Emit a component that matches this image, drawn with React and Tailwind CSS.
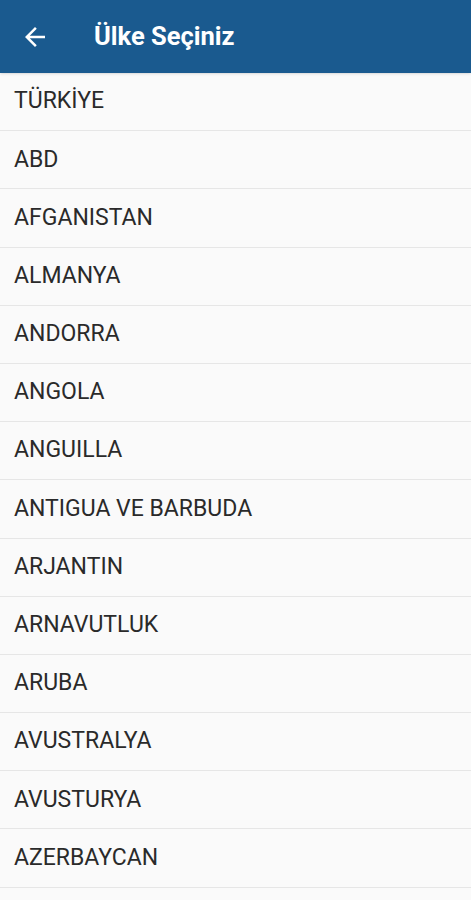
import React from 'react'

const countries = [
  "TÜRKİYE",
  "ABD",
  "AFGANISTAN",
  "ALMANYA",
  "ANDORRA",
  "ANGOLA",
  "ANGUILLA",
  "ANTIGUA VE BARBUDA",
  "ARJANTIN",
  "ARNAVUTLUK",
  "ARUBA",
  "AVUSTRALYA",
  "AVUSTURYA",
  "AZERBAYCAN",
]

const App = () => {
  return (
    <div className="w-[471px] h-[900px] overflow-hidden bg-[#fafafa] font-['Roboto',sans-serif]">
      {/* HEADER */}
      <div className="h-[73px] bg-[#1a5a8f] flex items-center shadow-sm">
        <button className="w-[70px] h-full flex items-center justify-center text-white">
          <svg width="30" height="30" viewBox="0 0 24 24" fill="currentColor">
            <path d="M20 11H7.83l5.59-5.59L12 4l-8 8 8 8 1.41-1.41L7.83 13H20v-2z" />
          </svg>
        </button>
        <h1 className="pl-[24px] text-[25.5px] font-bold text-white">
          Ülke Seçiniz
        </h1>
      </div>

      {/* LIST */}
      <ul>
        {countries.map((c) => (
          <li
            key={c}
            className="h-[58.2px] flex items-center px-[14px] border-b border-[#e6e6e6] text-[23px] text-[#2a2a2a]"
          >
            {c}
          </li>
        ))}
      </ul>
    </div>
  )
}

export default App
